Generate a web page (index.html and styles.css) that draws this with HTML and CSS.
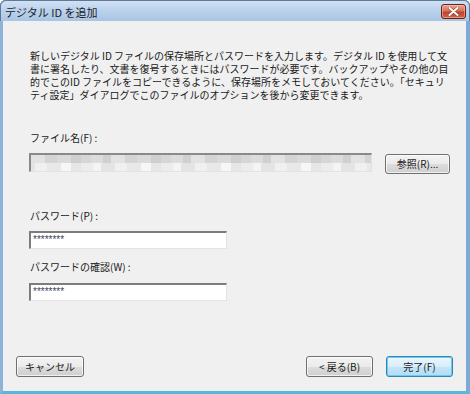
FILE: index.html
```html
<!DOCTYPE html>
<html lang="ja">
<head>
  <meta charset="UTF-8" />
  <title>デジタル ID を追加</title>
  <link rel="stylesheet" href="styles.css">
</head>
<body>

  <div class="window">
    <div class="titlebar">
      <span class="title">デジタル ID を追加</span>
      <span class="close">
        <svg width="11" height="9" viewBox="0 0 11 9">
          <path d="M1.5 1 L9.5 8 M9.5 1 L1.5 8" stroke="#5a1d12" stroke-width="3.2" stroke-linecap="round" opacity="0.5" />
          <path d="M1.5 1 L9.5 8 M9.5 1 L1.5 8" stroke="#fff" stroke-width="2" stroke-linecap="round" />
        </svg>
      </span>
    </div>

    <div class="content">
      <p class="intro">新しいデジタル ID ファイルの保存場所とパスワードを入力します。デジタル ID を使用して文<br>書に署名したり、文書を復号するときにはパスワードが必要です。バックアップやその他の目<br>的でこのID ファイルをコピーできるように、保存場所をメモしておいてください。「セキュリ<br>ティ設定」ダイアログでこのファイルのオプションを後から変更できます。</p>

      <div class="label label-file">ファイル名(F) :</div>
      <div class="file-row">
        <div class="file-field"></div>
        <button class="btn btn-browse">参照(R)...</button>
      </div>

      <div class="label label-pass">パスワード(P) :</div>
      <div class="pass-field">********</div>

      <div class="label label-confirm">パスワードの確認(W) :</div>
      <div class="pass-field">********</div>

      <div class="footer">
        <button class="btn btn-cancel">キャンセル</button>
        <span class="spacer"></span>
        <button class="btn">&lt; 戻る(B)</button>
        <button class="btn btn-default">完了(F)</button>
      </div>
    </div>
  </div>

</body>
</html>
```

FILE: styles.css
```css
* {
  box-sizing: border-box;
}

body {
  margin: 0;
  padding: 0;
  background: #fff;
  font-family: "Noto Sans CJK JP", "Noto Sans", sans-serif;
  color: #1a1a1a;
}

.window {
  width: 470px;
  height: 394px;
  display: flex;
  flex-direction: column;
  background: #a9c5e4;
  border-radius: 6px 6px 0 0;
  box-shadow: inset 0 0 0 1px #5f7a99;
}

.titlebar {
  height: 21px;
  display: flex;
  align-items: flex-start;
  padding: 0 4px 0 5px;
  border-radius: 6px 6px 0 0;
  background: linear-gradient(to bottom, #d4e3f4 0%, #bcd3ed 45%, #a9c5e5 100%);
  box-shadow: inset 0 1px 0 #5f7a99, inset 1px 0 0 #5f7a99, inset -1px 0 0 #5f7a99;
}

.title {
  font-size: 11px;
  line-height: 13px;
  margin-top: 6px;
  color: #1c1c1c;
}

.close {
  margin-left: auto;
  margin-top: 4px;
  width: 25px;
  height: 15px;
  border: 1px solid #6b2118;
  border-radius: 3px;
  background: linear-gradient(to bottom, #e8a493 0%, #d7735c 45%, #c2412b 55%, #d0654d 100%);
  box-shadow: inset 0 0 0 1px rgba(255, 220, 200, 0.45);
  display: flex;
  justify-content: center;
  align-items: center;
}

.content {
  flex: 1;
  display: flex;
  flex-direction: column;
  background: #f0f0f0;
  border-left: 3px solid #8fb2d8;
  border-right: 4px solid #7ea9d6;
  border-bottom: 3px solid #58b7df;
}

.intro {
  margin: 28px 0 0 27px;
  font-size: 10px;
  line-height: 13px;
  white-space: nowrap;
}

.label {
  margin-left: 27px;
  font-size: 10px;
  line-height: 13px;
}

.label-file {
  margin-top: 30px;
}

.label-pass {
  margin-top: 35px;
}

.label-confirm {
  margin-top: 11px;
}

.file-row {
  display: flex;
  align-items: flex-start;
  gap: 13px;
  margin: 9px 0 0 26px;
}

.file-field {
  width: 343px;
  height: 19px;
  border-top: 2px solid #8a8a8a;
  border-left: 2px solid #8a8a8a;
  border-right: 1px solid #e2e2e2;
  border-bottom: 1px solid #e2e2e2;
  background:
    linear-gradient(to right, #d6d6d6 0 10px, #dcdcdc 10px 22px, #d0d0d0 22px 30px, #e2e2e2 30px 44px, #d4d4d4 44px 56px, #dadada 56px 70px, #cfcfcf 70px 80px) top / 80px 50% repeat-x,
    linear-gradient(to right, #ececec 0 12px, #f4f4f4 12px 20px, #e4e4e4 20px 34px, #f0f0f0 34px 46px, #e8e8e8 46px 60px, #f6f6f6 60px 70px, #e6e6e6 70px 80px) bottom / 80px 50% repeat-x;
}

.pass-field {
  width: 198px;
  height: 18px;
  margin: 9px 0 0 26px;
  padding: 2px 0 0 2px;
  background: #fff;
  border-top: 2px solid #7c7c7c;
  border-left: 2px solid #7c7c7c;
  border-right: 1px solid #e3e3e3;
  border-bottom: 1px solid #e3e3e3;
  font-family: "Liberation Sans", sans-serif;
  font-size: 10px;
  line-height: 10px;
  color: #3b3f5c;
}

.label-confirm + .pass-field {
  margin-top: 10px;
}

.btn {
  font-family: "Noto Sans CJK JP", "Noto Sans", sans-serif;
  font-size: 10px;
  line-height: 12px;
  color: #1a1a1a;
  height: 21px;
  width: 67px;
  padding: 0;
  border: 1px solid #707070;
  border-radius: 3px;
  background: linear-gradient(to bottom, #f3f3f3 0%, #ebebeb 50%, #dddddd 50%, #cfcfcf 100%);
  box-shadow: inset 0 0 0 1px rgba(255, 255, 255, 0.7);
}

.btn-browse {
  width: 65px;
  height: 20px;
  margin-top: 1px;
}

.footer {
  margin-top: auto;
  display: flex;
  gap: 13px;
  padding: 0 13px 14px 13px;
}

.btn-cancel {
  width: 68px;
}

.spacer {
  flex: 1;
}

.btn-default {
  border-color: #3c7fb1;
  background: linear-gradient(to bottom, #eaf6fd 0%, #d9eefb 50%, #c4e4f7 50%, #b6dcf3 100%);
  box-shadow: inset 0 0 0 1px #5fd0f6;
}
```
